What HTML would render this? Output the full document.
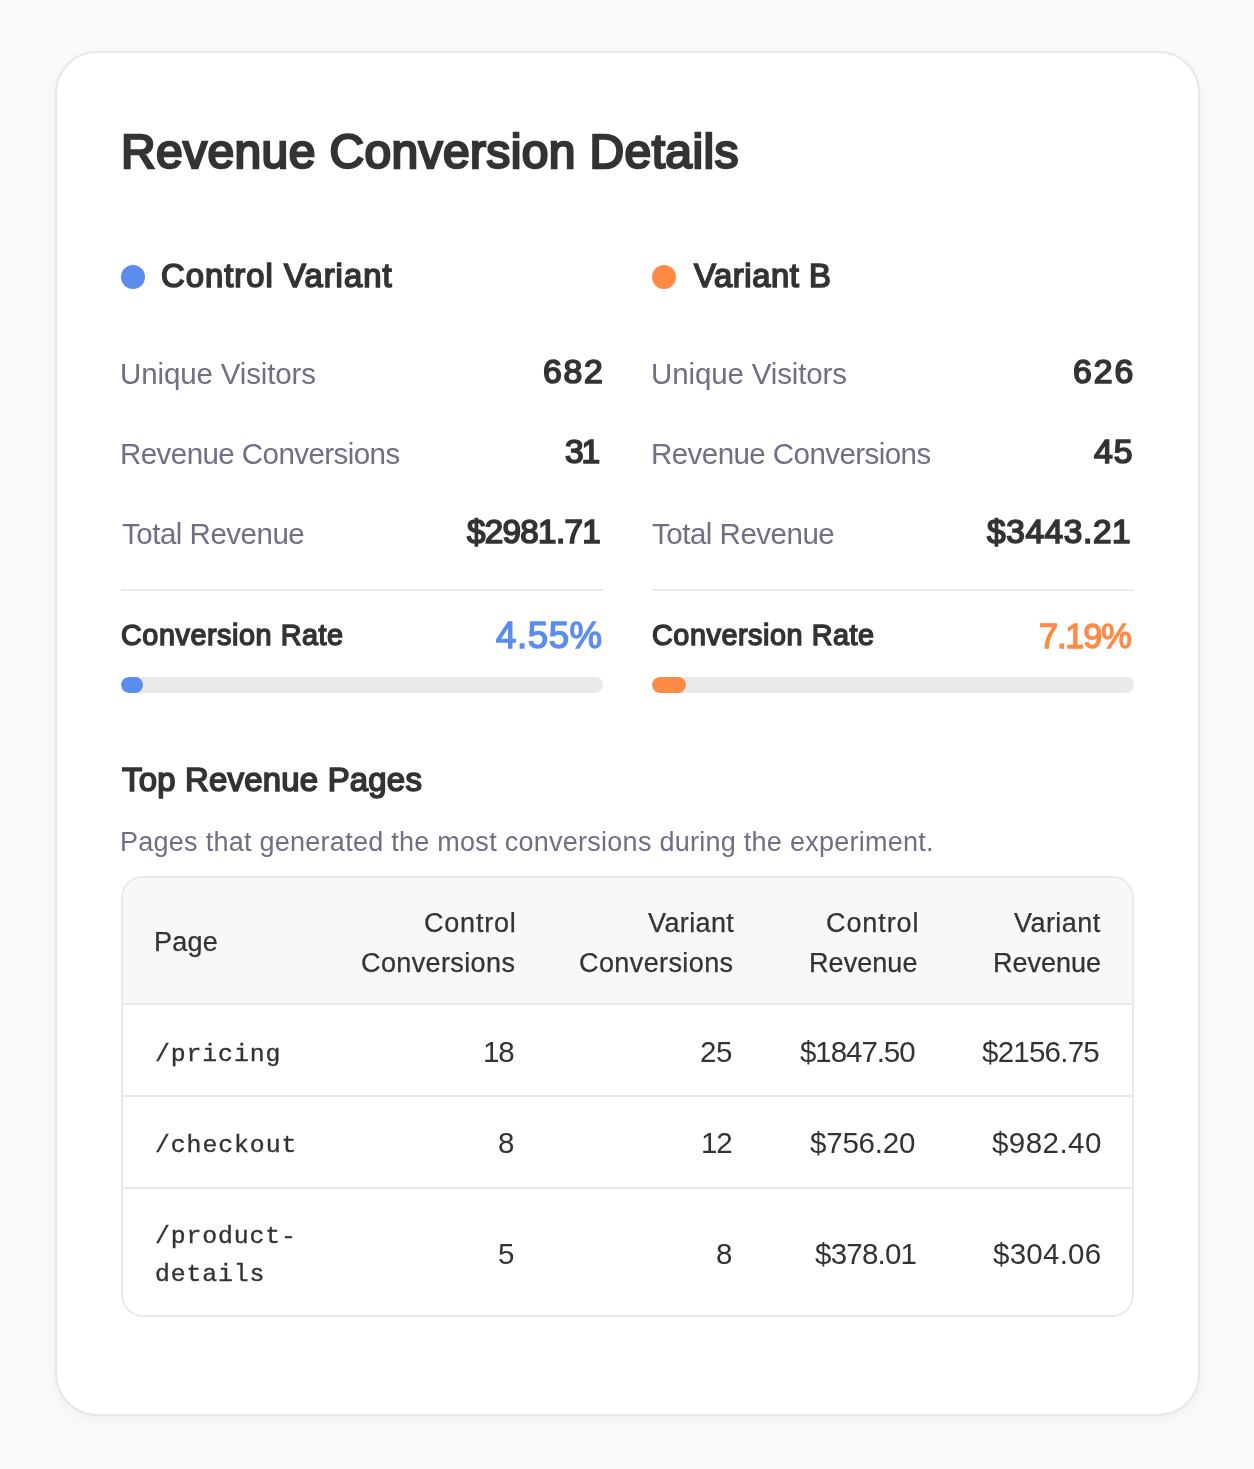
<!DOCTYPE html>
<html><head><meta charset="utf-8">
<style>
*{box-sizing:border-box;margin:0;padding:0}
html,body{width:1254px;height:1469px;background:#fafafa;overflow:hidden}
body{font-family:"Liberation Sans",sans-serif;color:#333;position:relative}
.card{position:absolute;left:55px;top:51px;width:1145px;height:1365px;background:#fff;border:2px solid #e7e7e7;border-radius:42px;box-shadow:0 4px 14px rgba(0,0,0,0.045)}
.t{position:absolute;white-space:nowrap;line-height:1;color:#333;will-change:transform}
.sb{font-weight:400;-webkit-text-stroke:0.05em currentColor}
.lbl{color:#6f6f85}
.pct{font-weight:400;-webkit-text-stroke:0.038em currentColor}
.th{color:#333;-webkit-text-stroke:0.25px #333}
.td{color:#333}
.mono{font-family:"Liberation Mono",monospace;-webkit-text-stroke:0.35px #333}
.dot{position:absolute;width:24px;height:24px;border-radius:50%}
.hr{position:absolute;height:2px;background:#ebebeb}
.bar{position:absolute;height:16px;border-radius:8px;background:#e9e9e9;overflow:hidden}
.bar i{display:block;height:16px;border-radius:8px}
.table{position:absolute;left:121px;top:876px;width:1013px;height:441px;border:2px solid #e9e9e9;border-radius:22px;background:#fff;overflow:hidden}
.thead{position:absolute;left:0;top:0;width:100%;height:127px;background:#f8f8f8;border-bottom:2px solid #e9e9e9}
.rl{position:absolute;left:0;width:100%;height:2px;background:#e9e9e9}
</style></head><body>
<div class="card"></div>
<div class="dot" style="left:121px;top:265px;background:#5b8def"></div>
<div class="dot" style="left:652px;top:265px;background:#ff8a45"></div>
<div class="hr" style="left:121px;top:589px;width:482px"></div>
<div class="hr" style="left:652px;top:589px;width:482px"></div>
<div class="bar" style="left:121px;top:677px;width:482px"><i style="width:22px;background:#5b8def"></i></div>
<div class="bar" style="left:652px;top:677px;width:482px"><i style="width:34px;background:#ff8a45"></i></div>
<div class="table">
  <div class="thead"></div>
  <div class="rl" style="top:217px"></div>
  <div class="rl" style="top:309px"></div>
</div>

<div class="t sb" style="left:121.00px;top:128.00px;font-size:48.0px;letter-spacing:0.367px">Revenue Conversion Details</div>
<div class="t sb" style="left:161.00px;top:260.00px;font-size:32.8px;letter-spacing:1.016px">Control Variant</div>
<div class="t sb" style="left:694.00px;top:260.00px;font-size:32.8px;letter-spacing:0.562px">Variant B</div>
<div class="t lbl" style="left:120.00px;top:359.00px;font-size:29.5px;letter-spacing:-0.129px">Unique Visitors</div>
<div class="t lbl" style="left:120.00px;top:439.00px;font-size:29.5px;letter-spacing:-0.560px">Revenue Conversions</div>
<div class="t lbl" style="left:122.00px;top:519.00px;font-size:29.5px;letter-spacing:-0.488px">Total Revenue</div>
<div class="t sb" style="left:121.00px;top:621.00px;font-size:28.8px;letter-spacing:0.546px">Conversion Rate</div>
<div class="t lbl" style="left:651.00px;top:359.00px;font-size:29.5px;letter-spacing:-0.129px">Unique Visitors</div>
<div class="t lbl" style="left:651.00px;top:439.00px;font-size:29.5px;letter-spacing:-0.560px">Revenue Conversions</div>
<div class="t lbl" style="left:652.00px;top:519.00px;font-size:29.5px;letter-spacing:-0.488px">Total Revenue</div>
<div class="t sb" style="left:652.00px;top:621.00px;font-size:28.8px;letter-spacing:0.546px">Conversion Rate</div>
<div class="t sb" style="left:543.00px;top:355.00px;font-size:33.8px;letter-spacing:1.710px">682</div>
<div class="t sb" style="left:565.00px;top:435.00px;font-size:33.6px;letter-spacing:-2.218px">31</div>
<div class="t sb" style="left:467.00px;top:515.00px;font-size:33.2px;letter-spacing:-0.680px">$2981.71</div>
<div class="t sb" style="left:1073.00px;top:355.00px;font-size:33.8px;letter-spacing:1.980px">626</div>
<div class="t sb" style="left:1094.00px;top:435.00px;font-size:33.8px;letter-spacing:0.990px">45</div>
<div class="t sb" style="left:987.00px;top:515.00px;font-size:33.4px;letter-spacing:0.630px">$3443.21</div>
<div class="t pct" style="left:496.00px;top:618.00px;font-size:36.6px;letter-spacing:0.596px;color:#5b8def">4.55%</div>
<div class="t pct" style="left:1039.00px;top:619.00px;font-size:34.4px;letter-spacing:-1.188px;color:#ff8a45">7.19%</div>
<div class="t sb" style="left:122.00px;top:764.00px;font-size:32.9px;letter-spacing:0.225px">Top Revenue Pages</div>
<div class="t lbl" style="left:120.00px;top:829.00px;font-size:27px;letter-spacing:0.264px">Pages that generated the most conversions during the experiment.</div>
<div class="t th" style="left:154.00px;top:929.00px;font-size:27px;letter-spacing:0.225px">Page</div>
<div class="t th" style="left:424.00px;top:910.00px;font-size:27px;letter-spacing:0.787px">Control</div>
<div class="t th" style="left:361.00px;top:950.00px;font-size:27px;letter-spacing:0.383px">Conversions</div>
<div class="t th" style="left:648.00px;top:910.00px;font-size:27px;letter-spacing:0.375px">Variant</div>
<div class="t th" style="left:579.00px;top:950.00px;font-size:27px;letter-spacing:0.405px">Conversions</div>
<div class="t th" style="left:826.00px;top:910.00px;font-size:27px;letter-spacing:0.900px">Control</div>
<div class="t th" style="left:809.00px;top:950.00px;font-size:27px;letter-spacing:0.060px">Revenue</div>
<div class="t th" style="left:1014.00px;top:910.00px;font-size:27px;letter-spacing:0.450px">Variant</div>
<div class="t th" style="left:993.00px;top:950.00px;font-size:27px;letter-spacing:0.000px">Revenue</div>
<div class="t td" style="left:483.00px;top:1037.00px;font-size:29.5px;letter-spacing:-1.062px">18</div>
<div class="t td" style="left:700.00px;top:1037.00px;font-size:29.5px;letter-spacing:-0.450px">25</div>
<div class="t td" style="left:800.00px;top:1037.00px;font-size:29.5px;letter-spacing:-1.062px">$1847.50</div>
<div class="t td" style="left:982.00px;top:1037.00px;font-size:29.5px;letter-spacing:-0.759px">$2156.75</div>
<div class="t td" style="left:498.00px;top:1128.00px;font-size:29.5px;letter-spacing:0.000px">8</div>
<div class="t td" style="left:701.00px;top:1128.00px;font-size:29.5px;letter-spacing:-1.062px">12</div>
<div class="t td" style="left:810.00px;top:1128.00px;font-size:29.5px;letter-spacing:-0.210px">$756.20</div>
<div class="t td" style="left:992.00px;top:1128.00px;font-size:29.5px;letter-spacing:0.450px">$982.40</div>
<div class="t td" style="left:498.00px;top:1239.00px;font-size:29.5px;letter-spacing:0.000px">5</div>
<div class="t td" style="left:716.00px;top:1239.00px;font-size:29.5px;letter-spacing:0.000px">8</div>
<div class="t td" style="left:815.00px;top:1239.00px;font-size:29.5px;letter-spacing:-0.780px">$378.01</div>
<div class="t td" style="left:993.00px;top:1239.00px;font-size:29.5px;letter-spacing:0.255px">$304.06</div>
<div class="t mono" style="left:155.00px;top:1042.00px;font-size:24.8px;letter-spacing:0.900px">/pricing</div>
<div class="t mono" style="left:155.00px;top:1133.00px;font-size:24.8px;letter-spacing:0.928px">/checkout</div>
<div class="t mono" style="left:155.00px;top:1224.00px;font-size:24.8px;letter-spacing:0.872px">/product-</div>
<div class="t mono" style="left:155.00px;top:1262.00px;font-size:24.8px;letter-spacing:0.863px">details</div>
</body></html>
